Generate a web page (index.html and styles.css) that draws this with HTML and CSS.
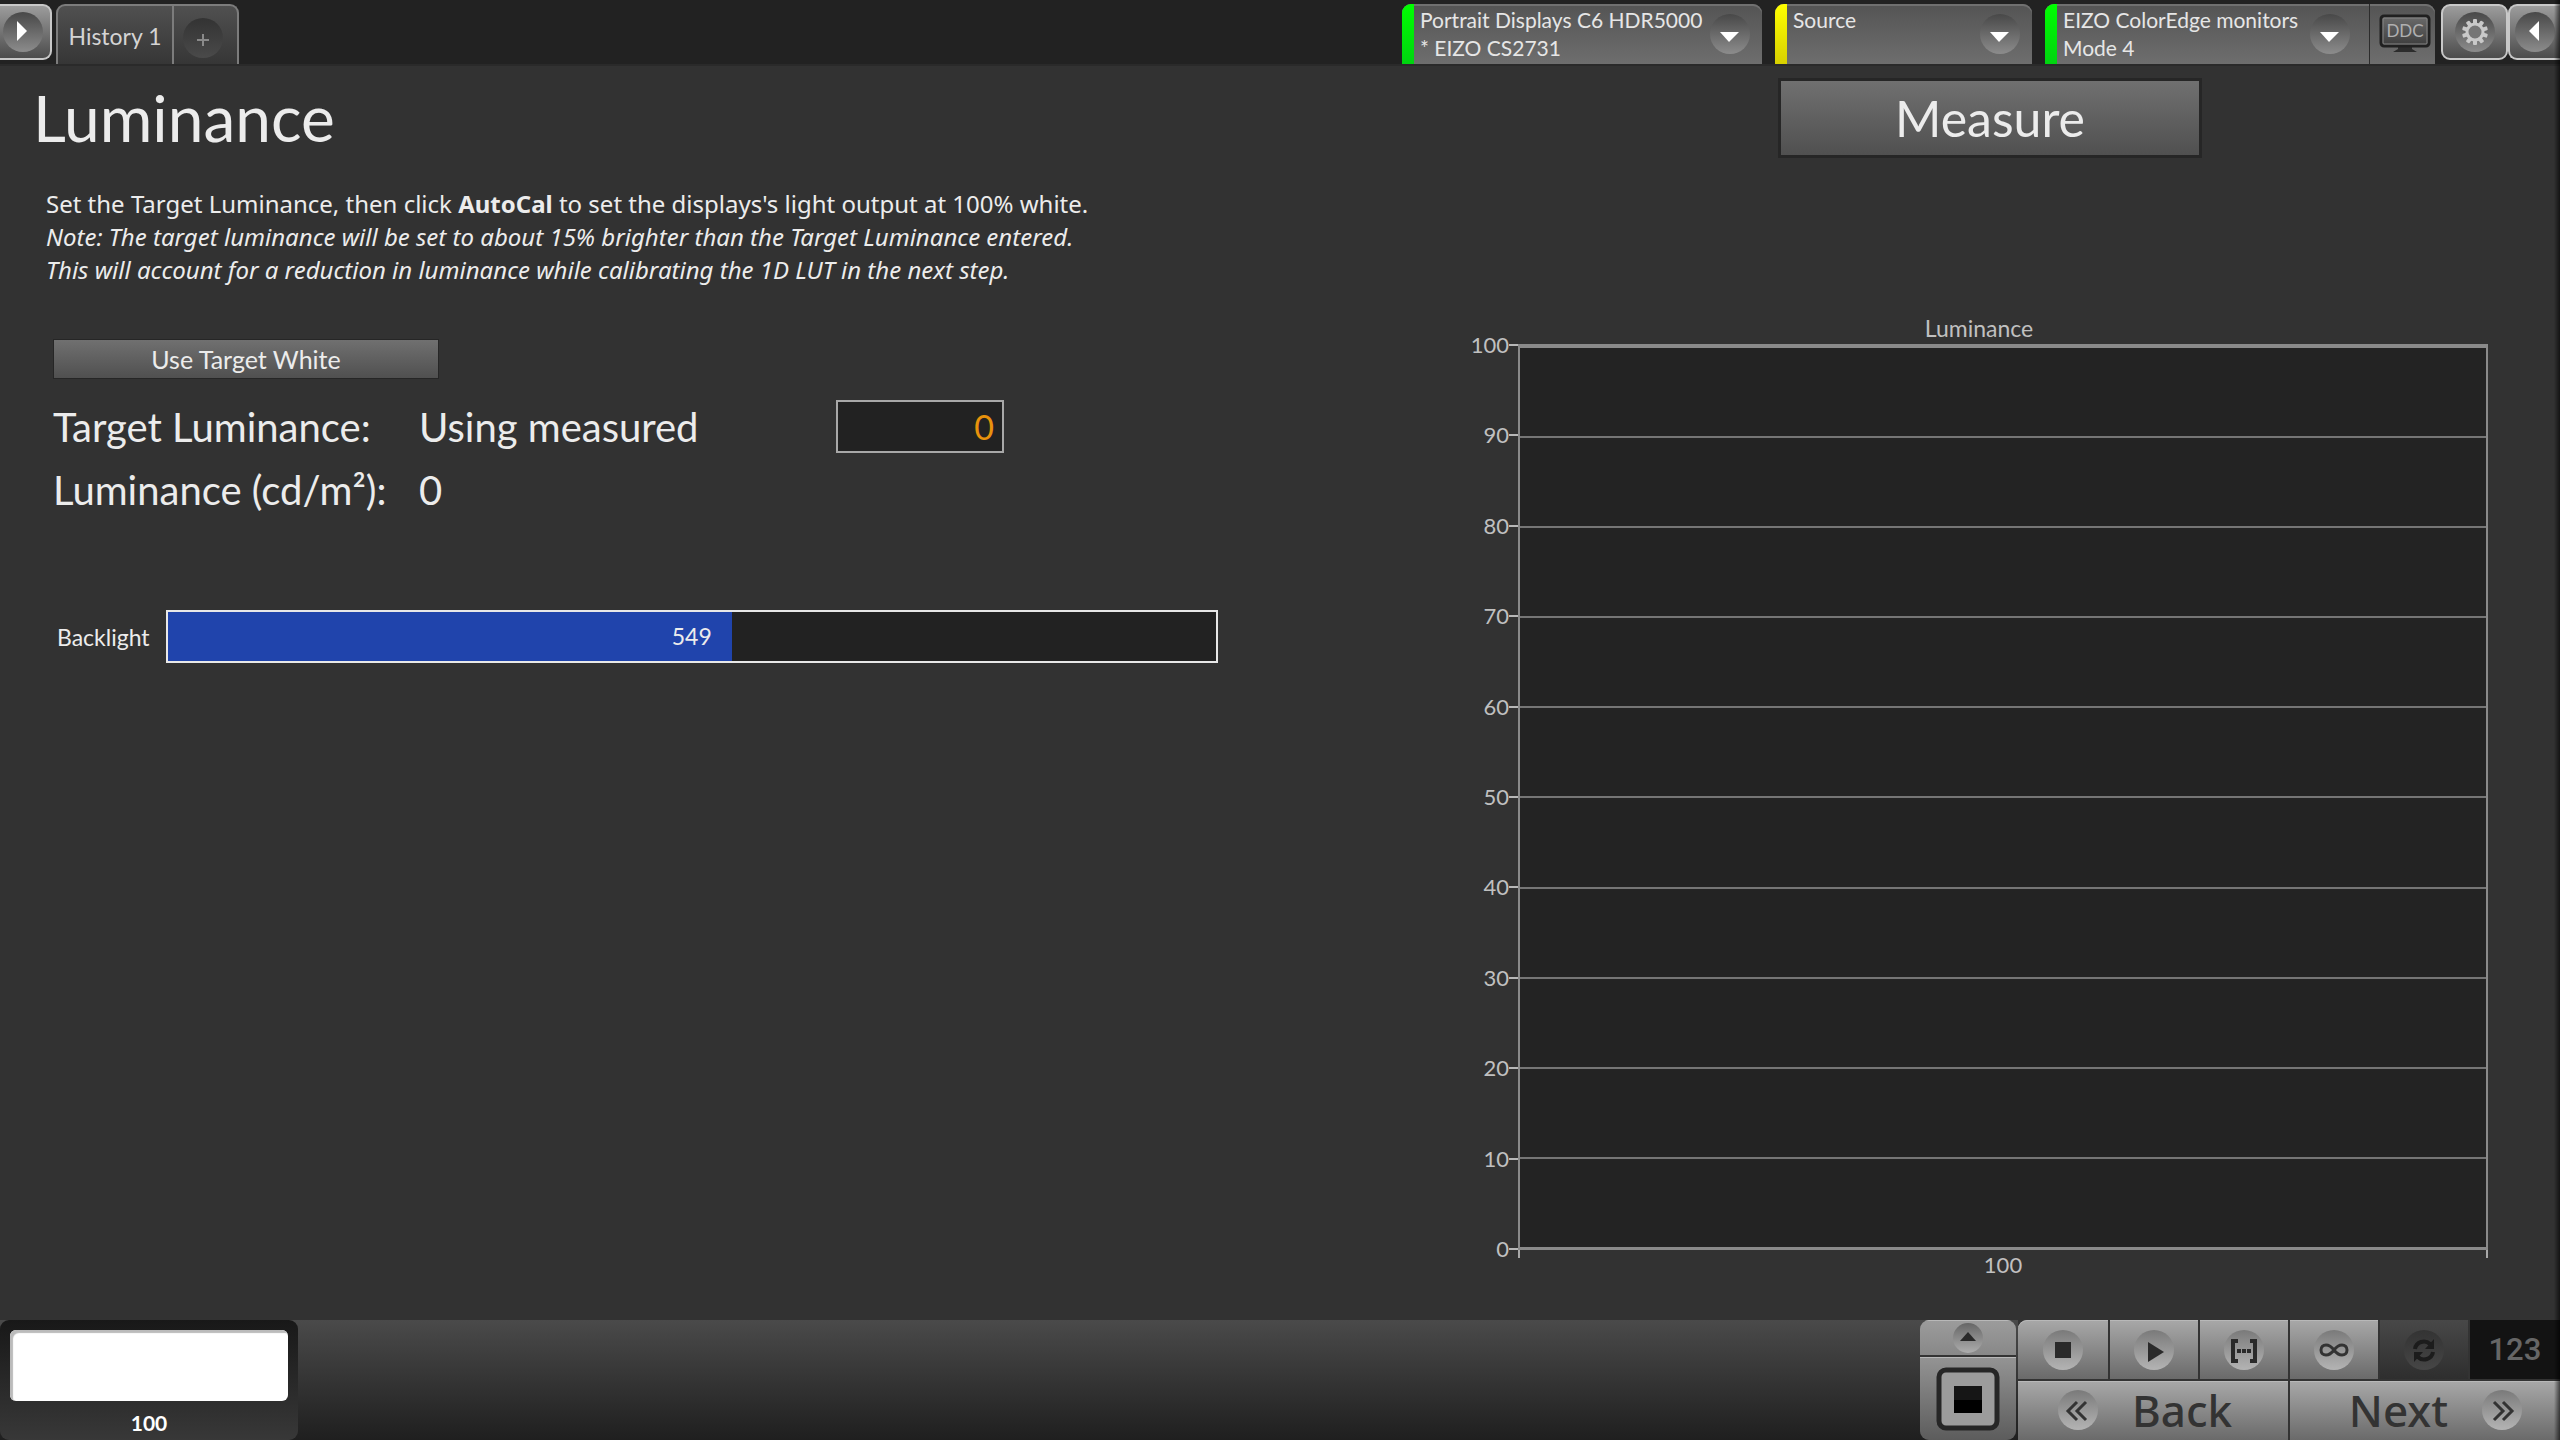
FILE: index.html
```html
<!DOCTYPE html>
<html lang="en">
<head>
    <meta charset="UTF-8">
    <meta name="viewport" content="width=device-width, initial-scale=1.0">
    <title>Luminance</title>
    <link rel="stylesheet" href="styles.css">
</head>
<body>
    <!-- Top bar -->
    <header class="topbar">
        <button class="side-btn side-left" type="button" aria-label="Open left panel">
            <span class="knob"><svg width="40" height="40" viewBox="0 0 40 40"><path d="M14 9L24 19L14 29Z" fill="#fff"/></svg></span>
        </button>
        <nav class="tabs">
            <button class="tab" type="button">History 1</button>
            <button class="tab tab-add" type="button" aria-label="Add history">
                <span class="knob knob-dim"><svg width="40" height="40" viewBox="0 0 40 40"><path d="M14 22H26M20 16V28" stroke="#8a8a8a" stroke-width="2"/></svg></span>
            </button>
        </nav>

        <div class="devices">
            <button class="device device-meter" type="button" aria-haspopup="menu">
                <span class="status green"></span>
                <span class="device-name">Portrait Displays C6 HDR5000<br>* EIZO CS2731</span>
                <span class="knob"><svg width="40" height="40" viewBox="0 0 40 40"><path d="M10 18H29L19 28Z" fill="#fff"/></svg></span>
            </button>
            <button class="device device-source" type="button" aria-haspopup="menu">
                <span class="status yellow"></span>
                <span class="device-name">Source</span>
                <span class="knob"><svg width="40" height="40" viewBox="0 0 40 40"><path d="M10 18H29L19 28Z" fill="#fff"/></svg></span>
            </button>
            <div class="device-group">
                <button class="device device-display" type="button" aria-haspopup="menu">
                    <span class="status green"></span>
                    <span class="device-name">EIZO ColorEdge monitors<br>Mode 4</span>
                    <span class="knob"><svg width="40" height="40" viewBox="0 0 40 40"><path d="M10 18H29L19 28Z" fill="#fff"/></svg></span>
                </button>
                <button class="ddc" type="button">
                    <svg width="52" height="40" viewBox="0 0 52 40">
                        <defs>
                            <linearGradient id="screen" x1="0" y1="0" x2="0" y2="1">
                                <stop offset="0" stop-color="#6c6c6c"/>
                                <stop offset="1" stop-color="#3c3c3c"/>
                            </linearGradient>
                        </defs>
                        <path d="M19 32H33V35L38 38H14L19 35Z" fill="#2c2c2c"/>
                        <rect x="2" y="2" width="48" height="30" rx="3" fill="url(#screen)" stroke="#202020" stroke-width="3"/>
                        <rect x="4" y="4" width="44" height="26" rx="1" fill="none" stroke="#858585"/>
                        <text x="26" y="23" text-anchor="middle" class="ddc-text">DDC</text>
                    </svg>
                </button>
            </div>
        </div>
        <button class="side-btn side-settings" type="button" aria-label="Settings">
            <span class="knob">
                <svg width="40" height="40" viewBox="0 0 40 40">
                    <g fill="#c9c9c9">
                        <rect x="18" y="7" width="4" height="26" rx="1"/>
                        <rect x="18" y="7" width="4" height="26" rx="1" transform="rotate(36 20 20)"/>
                        <rect x="18" y="7" width="4" height="26" rx="1" transform="rotate(72 20 20)"/>
                        <rect x="18" y="7" width="4" height="26" rx="1" transform="rotate(108 20 20)"/>
                        <rect x="18" y="7" width="4" height="26" rx="1" transform="rotate(144 20 20)"/>
                    </g>
                    <circle cx="20" cy="20" r="8" fill="#767676" stroke="#c9c9c9" stroke-width="3"/>
                </svg>
            </span>
        </button>
        <button class="side-btn side-right" type="button" aria-label="Open right panel">
            <span class="knob"><svg width="40" height="40" viewBox="0 0 40 40"><path d="M24 9L14 19L24 29Z" fill="#fff"/></svg></span>
        </button>
    </header>

    <main class="workspace">
        <!-- Settings -->
        <section class="settings">
            <h1>Luminance</h1>
            <p class="intro">
                Set the Target Luminance, then click <strong>AutoCal</strong> to set the displays's light output at 100% white.<br>
                <em>Note: The target luminance will be set to about 15% brighter than the Target Luminance entered.</em><br>
                <em>This will account for a reduction in luminance while calibrating the 1D LUT in the next step.</em>
            </p>
            <button class="btn target-white" type="button">Use Target White</button>

            <div class="readings">
                <label for="target">Target Luminance:</label>
                <span>Using measured</span>
                <input id="target" class="target-input" type="text" value="0">
                <span>Luminance (cd/m²):</span>
                <span>0</span>
            </div>

            <div class="backlight">
                <label for="backlight">Backlight</label>
                <div class="slider" style="--fill: 53.8%">
                    <input id="backlight" type="range" min="0" max="1023" value="549">
                    <output class="slider-value" for="backlight">549</output>
                </div>
            </div>
        </section>

        <!-- Chart -->
        <section class="results">
            <button class="btn measure" type="button">Measure</button>
            <div class="chart">
                <h2>Luminance</h2>
                <div class="y-axis">
                    <span>100</span>
                    <span>90</span>
                    <span>80</span>
                    <span>70</span>
                    <span>60</span>
                    <span>50</span>
                    <span>40</span>
                    <span>30</span>
                    <span>20</span>
                    <span>10</span>
                    <span>0</span>
                </div>
                <div class="plot">
                    <i></i><i></i><i></i><i></i><i></i><i></i><i></i><i></i><i></i><i></i>
                </div>
                <div class="x-axis">100</div>
            </div>
        </section>
    </main>

    <!-- Bottom bar -->
    <footer class="bottombar">
        <div class="patch">
            <div class="patch-color"></div>
            <span>100</span>
        </div>
        <div class="window-controls">
            <button class="ctl" type="button" aria-label="Expand">
                <span class="knob knob-small"><svg width="30" height="30" viewBox="0 0 30 30"><path d="M7 18L15 9L23 18Z" fill="#2a2a2a"/></svg></span>
            </button>
            <button class="ctl ctl-window" type="button" aria-label="Pattern window">
                <svg width="64" height="64" viewBox="0 0 64 64">
                    <rect x="3" y="3" width="58" height="58" rx="7" fill="#9c9c9c" stroke="#262626" stroke-width="5"/>
                    <rect x="18" y="19" width="28" height="14" fill="#161616"/>
                    <rect x="18" y="33" width="28" height="13" fill="#000"/>
                </svg>
            </button>
        </div>
        <div class="transport">
            <button class="ctl" type="button" aria-label="Stop">
                <span class="knob knob-light"><svg width="40" height="40" viewBox="0 0 40 40"><rect x="12" y="12" width="16" height="16" fill="#2a2a2a"/></svg></span>
            </button>
            <button class="ctl" type="button" aria-label="Play">
                <span class="knob knob-light"><svg width="40" height="40" viewBox="0 0 40 40"><path d="M14 12L30 22L14 32Z" fill="#2a2a2a"/></svg></span>
            </button>
            <button class="ctl" type="button" aria-label="Read series">
                <span class="knob knob-light"><svg width="40" height="40" viewBox="0 0 40 40"><path d="M14 11H9V31H14M26 11H31V31H26" fill="none" stroke="#2a2a2a" stroke-width="4"/><path d="M13 19H17V23H13ZM18 19H22V23H18ZM23 19H27V23H23Z" fill="#2a2a2a"/></svg></span>
            </button>
            <button class="ctl" type="button" aria-label="Read continuous">
                <span class="knob knob-light"><svg width="40" height="40" viewBox="0 0 40 40"><path d="M20 20C17 16 15 15 12 15C9 15 7 17 7 20C7 23 9 25 12 25C15 25 17 24 20 20C23 16 25 15 28 15C31 15 33 17 33 20C33 23 31 25 28 25C25 25 23 24 20 20Z" fill="none" stroke="#333" stroke-width="3"/></svg></span>
            </button>
            <button class="ctl ctl-dark" type="button" aria-label="Refresh">
                <span class="knob knob-off"><svg width="40" height="40" viewBox="0 0 40 40"><path d="M11 19C12 12 21 9 26 14M29 22C28 29 19 32 14 27" fill="none" stroke="#1c1c1c" stroke-width="4"/><path d="M30 9V19H21ZM10 32V22H19Z" fill="#1c1c1c"/></svg></span>
            </button>
            <div class="counter">123</div>
            <button class="ctl step back" type="button">
                <span class="knob knob-light"><svg width="40" height="40" viewBox="0 0 40 40"><path d="M19 12L10 21L19 30M28 12L19 21L28 30" fill="none" stroke="#333" stroke-width="3"/></svg></span>
                <span>Back</span>
            </button>
            <button class="ctl step next" type="button">
                <span>Next</span>
                <span class="knob knob-light"><svg width="40" height="40" viewBox="0 0 40 40"><path d="M12 12L21 21L12 30M21 12L30 21L21 30" fill="none" stroke="#333" stroke-width="3"/></svg></span>
            </button>
        </div>
    </footer>
</body>
</html>
```
FILE: styles.css
```css
* {
    box-sizing: border-box;
}

body {
    font-family: Lato, "Noto Sans", sans-serif;
    font-size: 23px;
    color: #ececec;
    background-color: #323232;
    margin: 0;
    min-height: 100vh;
    display: flex;
    flex-direction: column;
}

/* shade of the closed panel on the right edge */
body::after {
    content: "";
    position: fixed;
    top: 0;
    right: 0;
    bottom: 0;
    width: 6px;
    background: linear-gradient(to right, rgba(0, 0, 0, 0), rgba(0, 0, 0, 0.6));
    pointer-events: none;
}

button {
    font: inherit;
    color: inherit;
    margin: 0;
    padding: 0;
    border: none;
    background: none;
    cursor: pointer;
}

svg {
    display: block;
}

.knob {
    flex: none;
    width: 40px;
    height: 40px;
    border-radius: 50%;
    background: linear-gradient(#484848, #8c8c8c);
}

.knob-dim {
    background: linear-gradient(#333, #4a4a4a);
}

.knob-light {
    background: linear-gradient(#7a7a7a, #b4b4b4);
}

.knob-small {
    width: 30px;
    height: 30px;
    background: linear-gradient(#666, #adadad);
}

.knob-off {
    background: linear-gradient(#333, #464646);
}

/* Top bar */
.topbar {
    display: flex;
    align-items: flex-start;
    height: 66px;
    padding-top: 4px;
    background-color: #222;
    border-bottom: 2px solid #2a2a2a;
}

.side-btn {
    display: flex;
    align-items: center;
    justify-content: center;
    height: 56px;
    border: 2px solid #c8c8c8;
    border-radius: 9px;
    background: linear-gradient(#9c9c9c, #4c4c4c);
}

.side-left {
    width: 52px;
    padding-right: 4px;
    border-left: none;
    border-radius: 0 9px 9px 0;
}

.side-settings {
    width: 67px;
    margin-left: 6px;
}

.side-right {
    width: 52px;
    border-right: none;
    border-radius: 9px 0 0 9px;
}

.tabs {
    display: flex;
    height: 60px;
    margin-left: 4px;
    border: 2px solid #7c7c7c;
    border-bottom: none;
    border-radius: 9px 9px 0 0;
    background: linear-gradient(#505050, #363636);
}

.tab {
    width: 114px;
    padding-top: 2px;
    color: #d4d4d4;
}

.tab-add {
    display: flex;
    align-items: flex-start;
    justify-content: center;
    width: 65px;
    padding: 12px 5px 0 0;
    border-left: 2px solid #7c7c7c;
}

.devices {
    display: flex;
    gap: 13px;
    height: 60px;
    margin-left: auto;
}

.device,
.device-group {
    display: flex;
    border-radius: 9px 9px 0 0;
    background: linear-gradient(#545454, #6e6e6e);
    box-shadow: inset 0 2px #707070;
    overflow: hidden;
}

.device {
    align-items: flex-start;
    text-align: left;
    height: 60px;
    padding-right: 12px;
}

.device-meter {
    width: 360px;
}

.device-source {
    width: 257px;
}

.device-group .device {
    width: 324px;
    padding-right: 19px;
    background: none;
    border-radius: 0;
    box-shadow: none;
}

.status {
    width: 12px;
    height: 60px;
    margin-right: 6px;
}

.green {
    background: linear-gradient(#00ff00, #00d410);
}

.yellow {
    background: linear-gradient(#ffff00, #d8d000);
}

.device-name {
    flex: 1;
    padding-top: 2px;
    font-size: 21px;
    line-height: 28px;
    white-space: nowrap;
    color: #e6e6e6;
}

.device .knob {
    margin-top: 10px;
}

.ddc {
    display: flex;
    align-items: flex-start;
    width: 66px;
    padding: 10px 0 0 9px;
    border-left: 1px solid #2c2c2c;
}

.ddc-text {
    font-size: 17px;
    fill: #b0b0b0;
}

/* Workspace */
.workspace {
    flex: 1;
    display: grid;
    grid-template-columns: 1470fr 1090fr;
}

.settings {
    padding: 10px 0 0 33px;
}

h1 {
    margin: 0;
    font-size: 64px;
    line-height: 84px;
    font-weight: normal;
}

.intro {
    margin: 27px 0 53px 13px;
    font-family: "Noto Sans", "Open Sans", sans-serif;
    font-size: 24px;
    line-height: 33px;
}

.btn {
    border: 1px solid #262626;
    background: linear-gradient(#707070, #505050);
}

.target-white {
    width: 386px;
    height: 40px;
    margin-left: 20px;
    font-size: 25px;
}

.readings {
    display: grid;
    grid-template-columns: 366px 417px 168px;
    align-items: center;
    grid-auto-rows: 53px;
    row-gap: 10px;
    margin: 21px 0 0 20px;
    font-size: 40px;
}

.target-input {
    width: 100%;
    height: 53px;
    padding: 0 8px;
    font: inherit;
    font-size: 34px;
    text-align: right;
    color: #e8920c;
    background-color: #222;
    border: 2px solid #a8a8a8;
}

.backlight {
    display: flex;
    align-items: center;
    gap: 16px;
    margin: 94px 252px 0 24px;
}

.slider {
    position: relative;
    flex: 1;
    height: 53px;
}

.slider input {
    display: block;
    appearance: none;
    width: 100%;
    height: 100%;
    margin: 0;
    border: 2px solid #e8e8e8;
    background: linear-gradient(to right, #2044ac var(--fill), #222 var(--fill));
}

.slider input::-webkit-slider-thumb {
    appearance: none;
    width: 1px;
    height: 49px;
}

.slider-value {
    position: absolute;
    top: 0;
    left: 0;
    width: var(--fill);
    padding-right: 20px;
    line-height: 53px;
    text-align: right;
    pointer-events: none;
}

/* Chart */
.results {
    display: flex;
    flex-direction: column;
    padding: 12px 72px 36px 0;
}

.measure {
    width: 424px;
    height: 80px;
    margin-left: 308px;
    border-width: 3px;
    font-size: 50px;
}

.chart {
    flex: 1;
    display: grid;
    grid-template-columns: 48px 1fr;
    grid-template-rows: auto 1fr auto;
    margin-top: 156px;
    font-size: 22px;
    color: #c0c0c0;
}

.chart h2 {
    grid-column: 1 / 3;
    margin: 0 0 2px;
    font-size: 23px;
    line-height: 28px;
    font-weight: normal;
    text-align: center;
}

.y-axis {
    display: flex;
    flex-direction: column;
    justify-content: space-between;
    margin: -12px 0;
    line-height: 26px;
}

.y-axis span {
    display: flex;
    align-items: center;
    justify-content: flex-end;
}

.y-axis span::after {
    content: "";
    width: 9px;
    height: 2px;
    background-color: #b8b8b8;
}

.plot {
    display: flex;
    flex-direction: column;
    border: 2px solid #8a8a8a;
    border-width: 4px 2px 3px;
    background-color: #232323;
}

.plot i {
    flex: 1;
}

.plot i + i {
    border-top: 2px solid #757575;
}

.x-axis {
    grid-column: 2;
    height: 34px;
    line-height: 30px;
    text-align: center;
    background: linear-gradient(#a8a8a8, #a8a8a8) 0 0 / 2px 8px no-repeat,
        linear-gradient(#a8a8a8, #a8a8a8) 100% 0 / 2px 8px no-repeat;
}

/* Bottom bar */
.bottombar {
    display: flex;
    height: 120px;
    background: linear-gradient(#4a4a4a, #1f1f1f);
}

.patch {
    width: 298px;
    padding: 10px;
    border-radius: 9px;
    background: linear-gradient(#181818, #383838);
    font-size: 21px;
    line-height: 44px;
    font-weight: bold;
    text-align: center;
    color: #fff;
}

.patch-color {
    height: 71px;
    border-radius: 6px;
    background-color: #fff;
    box-shadow: inset 3px 3px 1px #bbb;
}

.window-controls {
    display: grid;
    grid-template-rows: 35px 1fr;
    gap: 2px;
    width: 96px;
    margin-left: auto;
    margin-right: 2px;
    border-radius: 9px;
    background-color: #333;
    overflow: hidden;
}

.ctl {
    display: flex;
    align-items: center;
    justify-content: center;
    background: linear-gradient(#a8a8a8, #6a6a6a);
    box-shadow: inset 0 1px #b8b8b8;
}

.window-controls .ctl {
    background: linear-gradient(#9c9c9c, #888);
}

.window-controls .ctl-window {
    background: linear-gradient(#949494, #5c5c5c);
}

.transport {
    display: grid;
    grid-template-columns: 91fr 89fr 89fr 88fr 89fr 91fr;
    grid-template-rows: 59px 59px;
    gap: 2px;
    width: 542px;
    background-color: #333;
}

.transport .ctl:first-child {
    border-radius: 9px 0 0 0;
}

.ctl-dark {
    background: linear-gradient(#484848, #2e2e2e);
    box-shadow: none;
}

.counter {
    font-family: Roboto, sans-serif;
    font-size: 31px;
    line-height: 59px;
    font-weight: 500;
    text-align: center;
    color: #666;
    background-color: #131313;
}

.step {
    grid-column: span 3;
    gap: 34px;
    padding-bottom: 2px;
    font-family: "Noto Sans", sans-serif;
    font-size: 44px;
    line-height: 52px;
    font-weight: 500;
    color: #333;
}

.back {
    justify-content: flex-start;
    padding-left: 40px;
}

.next {
    justify-content: flex-end;
    padding-right: 38px;
}
```
